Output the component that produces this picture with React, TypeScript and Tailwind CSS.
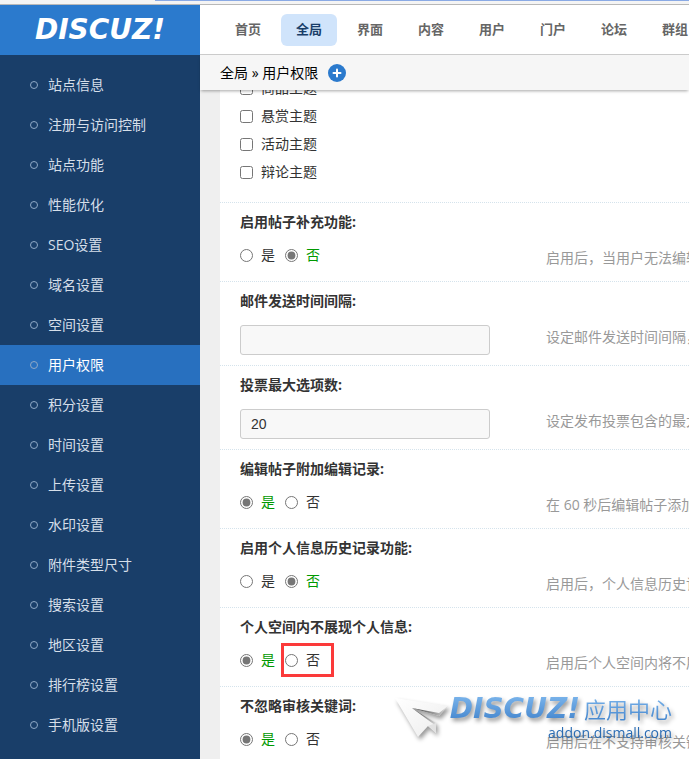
import React from 'react';
import { Plus } from 'lucide-react';

const navItems = ['首页', '全局', '界面', '内容', '用户', '门户', '论坛', '群组'];

const menuItems = [
  '站点信息',
  '注册与访问控制',
  '站点功能',
  '性能优化',
  'SEO设置',
  '域名设置',
  '空间设置',
  '用户权限',
  '积分设置',
  '时间设置',
  '上传设置',
  '水印设置',
  '附件类型尺寸',
  '搜索设置',
  '地区设置',
  '排行榜设置',
  '手机版设置',
];

const topics = ['商品主题', '悬赏主题', '活动主题', '辩论主题'];

type Setting = {
  id: string;
  title: string;
  tip: string;
  type: 'radio' | 'text';
  value: string;
  marked?: boolean;
};

const settings: Setting[] = [
  { id: 'postappend', title: '启用帖子补充功能:', tip: '启用后，当用户无法编辑帖子时', type: 'radio', value: '否' },
  { id: 'mailinterval', title: '邮件发送时间间隔:', tip: '设定邮件发送时间间隔，单位', type: 'text', value: '' },
  { id: 'maxpolloptions', title: '投票最大选项数:', tip: '设定发布投票包含的最大选项数', type: 'text', value: '20' },
  { id: 'editedby', title: '编辑帖子附加编辑记录:', tip: '在 60 秒后编辑帖子添加编辑', type: 'radio', value: '是' },
  { id: 'profilehistory', title: '启用个人信息历史记录功能:', tip: '启用后，个人信息历史记录', type: 'radio', value: '否' },
  { id: 'homepagestyle', title: '个人空间内不展现个人信息:', tip: '启用后个人空间内将不展现', type: 'radio', value: '是', marked: true },
  { id: 'commentmod', title: '不忽略审核关键词:', tip: '启用后在不支持审核关键词', type: 'radio', value: '是' },
];

function RadioRow({ item }: { item: Setting }) {
  return (
    <div className="mt-3.5 mb-[17px] flex h-[18px] items-center gap-2.5 leading-[18px]">
      {['是', '否'].map((option) => (
        <label
          key={option}
          className={`relative flex items-center gap-2 ${item.value === option ? 'text-[#009900]' : ''}`}
        >
          <input
            type="radio"
            name={item.id}
            defaultChecked={item.value === option}
            className="h-[13px] w-[13px] accent-[#767676]"
          />
          {option}
          {item.marked && option === '否' && (
            <span className="pointer-events-none absolute -top-2 -right-3.5 -bottom-2 -left-1 border-3 border-[#fb3a3a]" />
          )}
        </label>
      ))}
    </div>
  );
}

function SettingRow({ item }: { item: Setting }) {
  return (
    <section className="flex border-t border-dotted border-[#d5e3ec] px-5 pt-[9px]">
      <div className="w-[306px] shrink-0">
        {item.type === 'text' ? (
          <>
            <label htmlFor={item.id} className="block leading-5 font-bold">{item.title}</label>
            <input
              id={item.id}
              type="text"
              defaultValue={item.value}
              className="mt-3.5 mb-2.5 block h-[30px] w-[250px] rounded-[3px] border border-[#cccccc] bg-[#f8f8f8] px-2.5 font-['Liberation_Sans',Arial,sans-serif] text-sm outline-none"
            />
          </>
        ) : (
          <>
            <h3 className="leading-5 font-bold">{item.title}</h3>
            <RadioRow item={item} />
          </>
        )}
      </div>
      <p className="mt-9 leading-5 whitespace-nowrap text-[#999999]">{item.tip}</p>
    </section>
  );
}

function Watermark() {
  return (
    <div className="pointer-events-none absolute right-[17px] bottom-[18px] flex items-start drop-shadow-[2px_3px_2px_rgba(0,0,0,0.4)]">
      <svg width="56" height="44" viewBox="0 0 56 44" className="mt-1 shrink-0">
        <defs>
          <linearGradient id="plane" x1="0" y1="0" x2="1" y2="1">
            <stop offset="0" stopColor="#ffffff" />
            <stop offset="1" stopColor="#ececec" />
          </linearGradient>
          <linearGradient id="fold" x1="0" y1="0" x2="1" y2="0">
            <stop offset="0" stopColor="#3c3c3c" />
            <stop offset="1" stopColor="#d8d8d8" />
          </linearGradient>
        </defs>
        <path d="M1 1L54 9L45 19L18 11L42 26V36L34 29L24 40Z" fill="url(#plane)" />
        <path d="M18 11L45 19L54 9L45 16Z" fill="url(#fold)" />
        <path d="M18 11L42 26L41 28L34 23Z" fill="url(#fold)" />
        <path d="M34 29L42 26V36Z" fill="#e2e2e2" />
      </svg>
      <div className="flex flex-col items-end">
        <div className="flex h-8 items-center gap-1 bg-linear-to-b from-[#80b9ee] to-[#3c7fc9] bg-clip-text text-transparent">
          <span className="font-['DejaVu_Sans',sans-serif] text-[28px] leading-8 font-bold italic">DISCUZ!</span>
          <span className="text-[22px] leading-8">应用中心</span>
        </div>
        <span className="text-sm leading-4 text-[#2b6cb3]">addon.dismall.com</span>
      </div>
    </div>
  );
}

export default function App() {
  return (
    <div className="relative flex h-screen flex-col overflow-hidden bg-[#efefef] font-['Open_Sans','Noto_Sans_CJK_SC',sans-serif] text-sm text-[#333333]">

      {/* Browser edge */}
      <div className="h-[5px] shrink-0 border-b border-[#b8b8b8] bg-[#f4f4f4]">
        <div className="ml-[155px] h-px bg-[#8aaae5]" />
      </div>

      <div className="flex min-h-0 flex-1">

        {/* Sidebar */}
        <aside className="flex w-[200px] shrink-0 flex-col bg-[#193e69] text-[#d6dfe9]">
          <h1 className="flex h-[50px] shrink-0 items-center justify-center bg-[#2b7acd] font-['DejaVu_Sans',sans-serif] text-[28px] leading-8 font-bold text-white italic">
            DISCUZ!
          </h1>
          <ul className="pt-2.5">
            {menuItems.map((name) => (
              <li key={name}>
                <a
                  href="#"
                  className={`flex h-10 items-center gap-2.5 pl-[30px] ${name === '用户权限' ? 'bg-[#2870bf] text-white' : ''}`}
                >
                  <span className="h-2 w-2 rounded-full border border-[#8fa9c6]" />
                  {name}
                </a>
              </li>
            ))}
          </ul>
        </aside>

        <main className="flex min-w-0 flex-1 flex-col">

          {/* Top navigation */}
          <nav className="flex h-[50px] shrink-0 items-center gap-[5px] overflow-hidden border-b border-[#cccccc] bg-white pl-5 text-[13px] font-bold text-[#666666]">
            {navItems.map((name) => (
              <a
                key={name}
                href="#"
                className={`flex h-8 w-14 shrink-0 items-center justify-center rounded-md ${name === '全局' ? 'bg-[#d0e4fb] text-[#193e69]' : ''}`}
              >
                {name}
              </a>
            ))}
          </nav>

          {/* Breadcrumb */}
          <div className="z-10 flex h-[35px] shrink-0 items-center gap-2.5 bg-[#f6f6f6] pl-5 text-black shadow-[0_2px_3px_-1px_rgba(0,0,0,0.35)]">
            <span>全局 » 用户权限</span>
            <button type="button" aria-label="添加" className="flex h-[18px] w-[18px] items-center justify-center rounded-full bg-[#2b7acd] text-white">
              <Plus size={12} strokeWidth={4} />
            </button>
          </div>

          {/* Settings form */}
          <div className="min-h-0 flex-1 overflow-hidden pl-5">
            <form className="-mt-4 bg-white">
              <div className="px-5 pb-4">
                {topics.map((name) => (
                  <label key={name} className="flex h-7 items-center gap-2">
                    <input type="checkbox" className="h-[13px] w-[13px]" />
                    {name}
                  </label>
                ))}
              </div>
              {settings.map((item) => (
                <SettingRow key={item.id} item={item} />
              ))}
            </form>
          </div>
        </main>
      </div>

      <Watermark />
    </div>
  );
}
